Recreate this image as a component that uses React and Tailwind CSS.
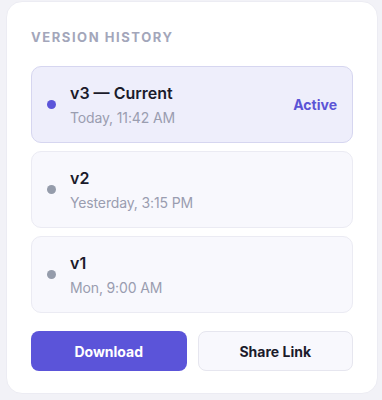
export default function App() {
  const items = [
    { v: "v3 — Current", t: "Today, 11:42 AM", active: true },
    { v: "v2", t: "Yesterday, 3:15 PM" },
    { v: "v1", t: "Mon, 9:00 AM" },
  ];
  return (
    <div className="w-[382px] h-[400px] bg-[#f2f2f7] pl-[6px] pr-[4px] pt-[1px]" style={{ fontFamily: "Inter, 'Noto Sans', sans-serif" }}>
      <div className="w-[372px] h-[393px] bg-white rounded-[16px] border border-[#ececf3] px-[24px] pt-[27px]">
        <div className="text-[13px] leading-[17px] font-bold tracking-[0.12em] text-[#a3a6ba]">VERSION HISTORY</div>
        <div className="mt-[20px] flex flex-col gap-[8px]">
          {items.map((it) => (
            <div
              key={it.v}
              className={`h-[77px] rounded-[10px] border flex items-center pl-[15px] pr-[15px] ${it.active ? "bg-[#eeeefb] border-[#d6d6f0]" : "bg-[#f8f8fd] border-[#ebebf3]"}`}
            >
              <div className={`w-[9px] h-[9px] rounded-full ${it.active ? "bg-[#5b54d9]" : "bg-[#959cab]"}`} />
              <div className="ml-[14px] flex flex-col flex-1">
                <div className="text-[16px] leading-[24px] font-semibold text-[#1b1b2b]">{it.v}</div>
                <div className="mt-[3px] text-[14px] leading-[20px] text-[#9a9db0] tracking-[-0.01em]">{it.t}</div>
              </div>
              {it.active && <div className="text-[14px] font-bold text-[#5b54d6]">Active</div>}
            </div>
          ))}
        </div>
        <div className="mt-[18px] flex gap-[11px]">
          <button className="w-[156px] h-[40px] rounded-[8px] bg-[#5b54d9] text-white text-[14px] font-bold">Download</button>
          <button className="w-[156px] h-[40px] rounded-[8px] bg-[#f8f8fd] border border-[#e6e6ef] text-[#1b1b2b] text-[14px] font-bold">Share Link</button>
        </div>
      </div>
    </div>
  );
}
